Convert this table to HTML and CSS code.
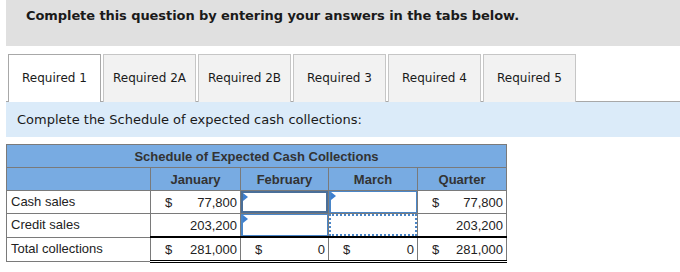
FILE: index.html
```html
<!DOCTYPE html>
<html>
<head>
<meta charset="utf-8">
<link rel="stylesheet" href="styles.css">
</head>
<body>
<div class="banner">Complete this question by entering your answers in the tabs below.</div>
<div class="tabs">
  <div class="tab active">Required 1</div>
  <div class="tab">Required 2A</div>
  <div class="tab">Required 2B</div>
  <div class="tab">Required 3</div>
  <div class="tab">Required 4</div>
  <div class="tab">Required 5</div>
</div>
<div class="instr">Complete the Schedule of expected cash collections:</div>
<table class="sched">
  <colgroup>
    <col class="c-label"><col class="c-jan"><col class="c-feb"><col class="c-mar"><col class="c-q">
  </colgroup>
  <tr class="h1"><th colspan="5">Schedule of Expected Cash Collections</th></tr>
  <tr class="h2"><th></th><th>January</th><th>February</th><th>March</th><th>Quarter</th></tr>
  <tr>
    <td class="lbl">Cash sales</td>
    <td><div class="amt"><span>$</span><span>77,800</span></div></td>
    <td class="in"><div class="inp focus"><i class="tri"></i></div></td>
    <td class="in"><div class="inp"><i class="tri"></i></div></td>
    <td><div class="amt"><span>$</span><span>77,800</span></div></td>
  </tr>
  <tr>
    <td class="lbl">Credit sales</td>
    <td><div class="amt"><span></span><span>203,200</span></div></td>
    <td class="in"><div class="inp"><i class="tri"></i></div></td>
    <td class="in"><div class="inp dotted"></div></td>
    <td><div class="amt"><span></span><span>203,200</span></div></td>
  </tr>
  <tr class="total">
    <td class="lbl">Total collections</td>
    <td><div class="amt"><span>$</span><span>281,000</span></div></td>
    <td><div class="amt"><span>$</span><span>0</span></div></td>
    <td><div class="amt"><span>$</span><span>0</span></div></td>
    <td><div class="amt"><span>$</span><span>281,000</span></div></td>
  </tr>
</table>
</body>
</html>
```
FILE: styles.css
```css
html, body {
  margin: 0;
  padding: 0;
  background: #ffffff;
}
body {
  width: 680px;
  height: 272px;
  overflow: hidden;
}
.banner {
  margin-left: 6px;
  height: 46px;
  box-sizing: border-box;
  padding: 8px 0 0 20px;
  background: #e0e0e0;
  font-family: "DejaVu Sans", Verdana, sans-serif;
  font-weight: bold;
  font-size: 13px;
  letter-spacing: -0.08px;
  color: #1a1a1a;
}
.tabs {
  display: flex;
  gap: 2px;
  margin: 8px 0 0 6px;
  padding-left: 2px;
  border-bottom: 1px solid #a8a8a8;
  height: 47px;
}
.tab {
  width: 93px;
  box-sizing: border-box;
  height: 48px;
  border: 1px solid #c6c6c6;
  border-bottom: none;
  background: #f2f2f2;
  display: flex;
  align-items: center;
  justify-content: center;
  font-family: "DejaVu Sans", Verdana, sans-serif;
  font-size: 12px;
  color: #1a1a1a;
  padding-bottom: 1px;
}
.tab.active {
  background: #ffffff;
  border-color: #a8a8a8;
  position: relative;
  z-index: 1;
}
.instr {
  margin-left: 6px;
  height: 35px;
  box-sizing: border-box;
  padding: 10px 0 0 11px;
  background: #dbebf9;
  font-family: "DejaVu Sans", Verdana, sans-serif;
  font-size: 13px;
  color: #1a1a1a;
}
.sched {
  margin: 7px 0 0 6px;
  border-collapse: collapse;
  table-layout: fixed;
  width: 501px;
  font-family: "Liberation Sans", Arial, sans-serif;
  font-size: 13px;
  color: #222;
}
.c-label { width: 144px; }
.c-jan { width: 90px; }
.c-feb { width: 88px; }
.c-mar { width: 89px; }
.c-q { width: 89px; }
.sched th {
  background: #78abe2;
  border: 1px solid #7a7a7a;
  font-size: 13px;
  font-weight: bold;
  color: #333;
  height: 22px;
  padding: 0;
}
.sched td {
  border: 1px solid #7a7a7a;
  height: 22px;
  padding: 0;
  font-size: 13px;
  line-height: 16px;
  color: #222;
}
.sched td.lbl {
  padding-left: 4px;
}
.amt {
  display: flex;
  justify-content: space-between;
  padding: 1px 3px 0 14px;
}
.sched td.in {
  position: relative;
}
.inp {
  position: absolute;
  inset: 0;
  border: 1px solid #4a86c8;
  border-left-width: 2px;
}
.inp.focus {
  border: 2px solid #4a6f99;
}
.inp.dotted {
  border: 2px dotted #4a86c8;
  border-left-width: 2px;
}
.tri {
  position: absolute;
  left: 0;
  top: 0;
  width: 0;
  height: 0;
  border-top: 4px solid transparent;
  border-bottom: 4px solid transparent;
  border-left: 5px solid #3d7fd0;
}
.total td {
  border-top: 2px solid #000;
  border-bottom: 3px double #000;
}
.total td.lbl {
  border-top: 1px solid #7a7a7a;
  border-bottom: 1px solid #7a7a7a;
}
```
